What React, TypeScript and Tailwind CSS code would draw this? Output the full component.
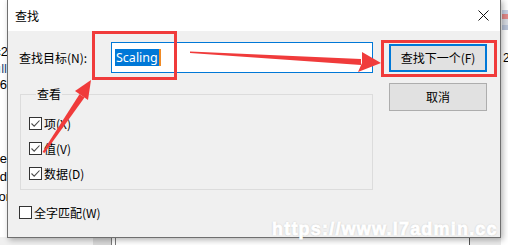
import React from "react";

const ui = "font-['Noto_Sans_CJK_SC','Noto_Sans',sans-serif]";

const Check = ({ checked }: { checked: boolean }) => (
  <span className="flex h-[13px] w-[13px] shrink-0 items-center justify-center border border-[#333333] bg-white">
    {checked && (
      <svg width="11" height="11" viewBox="0 0 11 11">
        <path d="M1.5 5.5 L4.2 8.2 L9.5 2.5" fill="none" stroke="#4a4a4a" strokeWidth="1.1" />
      </svg>
    )}
  </span>
);

const CheckRow = ({ label, checked }: { label: string; checked: boolean }) => (
  <div className="flex h-[13px] items-center gap-[2px]">
    <Check checked={checked} />
    <span className="text-[12px] leading-[13px] text-black">{label}</span>
  </div>
);

const LeftScraps = () => (
  <div className="absolute left-0 top-0 h-full w-[7px] overflow-hidden bg-white">
    <div className="flex w-[7px] flex-col items-end font-['Liberation_Sans',sans-serif] text-[13px] leading-[15px] text-black">
      <span className="mt-[44px] mr-[-1px] whitespace-nowrap">c2</span>
      <span className="mt-[2px] whitespace-nowrap text-[#2c4a7a]">ıll</span>
      <span className="mt-[1px] whitespace-nowrap">6</span>
      <span className="mt-[59px] whitespace-nowrap">e</span>
      <span className="mt-[3px] whitespace-nowrap">d</span>
      <span className="mt-[5px] mr-[-3px] whitespace-nowrap">or</span>
    </div>
  </div>
);

const BottomStrip = () => (
  <div className="absolute left-0 top-[237px] flex h-[8px] w-full">
    <div className="w-[93px] bg-[#f0f0f0]" />
    <div className="w-[18px] bg-[#d9d9d9]" />
    <div className="w-[1px] bg-[#7a7a7a]" />
    <div className="w-[3px] bg-white" />
    <div className="w-[1px] bg-[#7a7a7a]" />
    <div className="w-[353px] bg-white" />
    <div className="w-[1px] bg-[#555555]" />
    <div className="flex-1 bg-[#ececec]" />
  </div>
);

const RightScraps = () => (
  <div className="absolute left-[501px] top-0 flex h-full w-[7px] flex-col bg-white">
    <div className="mt-[10px] ml-[1px] h-[4px] w-[6px] bg-[#c9d3e6]" />
    <div className="ml-[1px] h-[5px] w-[6px] bg-[#e38a8a]" />
    <div className="ml-[1px] h-[6px] w-[6px] bg-[#d7dbe3]" />
    <div className="ml-[1px] h-[5px] w-[6px] bg-[#b8c3d8]" />
    <span className="ml-[2px] mt-[22px] font-['Liberation_Sans',sans-serif] text-[12px] leading-[12px] text-black">
      2
    </span>
  </div>
);

const Annotations = () => (
  <>
    <div className="absolute left-[92px] top-[31px] h-[49px] w-[85px] border-[3px] border-[#f03b3b]" />
    <div className="absolute left-[381px] top-[40px] h-[37px] w-[116px] border-[3px] border-[#f03b3b]" />
    <svg className="absolute left-0 top-0" width="508" height="245" viewBox="0 0 508 245">
      <polygon points="190,51.5 361,59 361,65 190,53" fill="#f03b3b" />
      <polygon points="362,52 381,63 358,72 362,63" fill="#f03b3b" />
      <polygon points="42.5,152 44.5,153 84.5,97.6 79.5,94.3" fill="#f03b3b" />
      <polygon points="91,80 75,91 88,100" fill="#f03b3b" />
    </svg>
    <div className="absolute left-[272px] top-[219px] whitespace-nowrap font-['Liberation_Sans',sans-serif] text-[18px] font-bold leading-[20px] tracking-[1.2px] text-white [-webkit-text-stroke:0.8px_white] [text-shadow:0_0_2px_rgba(0,0,0,0.3)]">
      https://www.l7admin.cc
    </div>
  </>
);

const FindDialog = () => (
  <div
    className={`absolute left-[7px] top-[-1px] flex h-[239px] w-[494px] flex-col border border-[#6f6f6f] bg-[#f0f0f0] shadow-[2px_2px_6px_rgba(0,0,0,0.3)] ${ui}`}
  >
    {/* Title bar */}
    <div className="flex h-[31px] items-center justify-between bg-white pl-[7px] pr-[11px]">
      <span className="text-[12px] text-black">查找</span>
      <svg width="11" height="11" viewBox="0 0 11 11">
        <path d="M0.5 0.5 L10.5 10.5 M10.5 0.5 L0.5 10.5" stroke="#111" strokeWidth="1" />
      </svg>
    </div>

    {/* Body */}
    <div className="flex flex-1 pl-[11px] pt-[11px]">
      <div className="flex w-[354px] flex-col">
        <div className="flex h-[31px] items-center">
          <span className="w-[92px] text-[12px] text-black">查找目标(N):</span>
          <div className="flex h-[31px] w-[262px] items-center border border-[#0078d7] bg-white pl-[3px]">
            <span className="bg-[#0078d7] px-[1px] font-['Noto_Sans',sans-serif] text-[12.5px] leading-[17px] text-white">
              Scaling
            </span>
            <span className="h-[17px] w-[2px] bg-[#f08a24]" />
          </div>
        </div>

        <fieldset className="ml-[1px] mt-[13px] h-[104px] w-[353px] border border-[#dcdcdc] pl-[8px]">
          <legend className="ml-[7px] px-[1px] text-[12px] leading-[16px] text-black">查看</legend>
          <div className="flex flex-col gap-[12px] pt-[15px]">
            <CheckRow label="项(X)" checked />
            <CheckRow label="值(V)" checked />
            <CheckRow label="数据(D)" checked />
          </div>
        </fieldset>

        <div className="mt-[16px]">
          <CheckRow label="全字匹配(W)" checked={false} />
        </div>
      </div>

      <div className="ml-[16px] flex w-[98px] flex-col gap-[11px] pt-[2px]">
        <button className="flex h-[28px] items-center justify-center border-2 border-[#0078d7] bg-[#e1e1e1] text-[12px] text-black">
          查找下一个(F)
        </button>
        <button className="flex h-[28px] items-center justify-center border border-[#adadad] bg-[#e1e1e1] text-[12px] text-black">
          取消
        </button>
      </div>
    </div>
  </div>
);

export default function App() {
  return (
    <div className="relative h-[245px] w-[508px] overflow-hidden bg-white">
      <LeftScraps />
      <BottomStrip />
      <RightScraps />
      <FindDialog />
      <Annotations />
    </div>
  );
}
